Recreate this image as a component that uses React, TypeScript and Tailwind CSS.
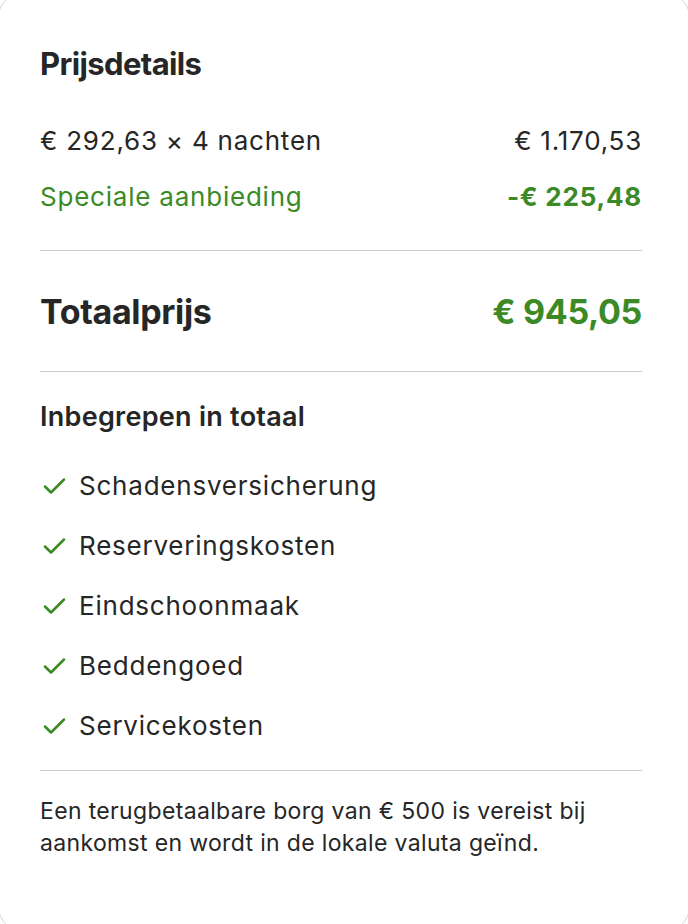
import React from "react";

const included = [
  "Schadensversicherung",
  "Reserveringskosten",
  "Eindschoonmaak",
  "Beddengoed",
  "Servicekosten",
];

function CheckIcon() {
  return (
    <svg width="24" height="20" viewBox="0 0 24 20" fill="none" className="ml-[2px] shrink-0">
      <path
        d="M3 10.5 9 16.5 22 3.5"
        stroke="#3b8a26"
        strokeWidth="2.5"
        strokeLinecap="round"
        strokeLinejoin="round"
      />
    </svg>
  );
}

export default function App() {
  return (
    <div className="w-[688px] h-[924px] overflow-hidden bg-white">
      <div
        className="-mt-[7px] -ml-[2px] w-[692px] h-[938px] rounded-3xl border border-[#d4d4d4] bg-white pt-[54px] pl-[41px] pr-[47px] text-[#262626]"
        style={{ fontFamily: "Inter, 'Noto Sans', sans-serif" }}
      >
        <h2 className="-mt-[2px] text-[31px] leading-9 font-bold tracking-[-0.02em]">Prijsdetails</h2>

        <div className="mt-[43px] flex justify-between text-[26px] leading-8 tracking-[0.03em]">
          <span>€ 292,63 × 4 nachten</span>
          <span>€ 1.170,53</span>
        </div>
        <div className="mt-6 flex justify-between text-[26px] leading-8 tracking-[0.03em] text-[#3b8a26]">
          <span>Speciale aanbieding</span>
          <span className="font-bold">-€ 225,48</span>
        </div>

        <div className="mt-[37px] h-px bg-[#cccccc]" />

        <div className="mt-[41px] flex justify-between text-[34px] leading-10 font-bold tracking-[-0.01em]">
          <span>Totaalprijs</span>
          <span className="text-[#3b8a26]">€ 945,05</span>
        </div>

        <div className="mt-[39px] h-px bg-[#cccccc]" />

        <h3 className="mt-[29px] text-[27px] leading-8 font-semibold tracking-[0.01em]">
          Inbegrepen in totaal
        </h3>

        <ul className="mt-[37px] flex flex-col gap-7">
          {included.map((item) => (
            <li key={item} className="flex items-center gap-[13px] text-[26px] leading-8 tracking-[0.03em]">
              <CheckIcon />
              <span>{item}</span>
            </li>
          ))}
        </ul>

        <div className="mt-7 h-px bg-[#cccccc]" />

        <p className="mt-6 text-[23px] leading-8 tracking-[0.015em]">
          Een terugbetaalbare borg van € 500 is vereist bij aankomst en wordt in de lokale valuta geïnd.
        </p>
      </div>
    </div>
  );
}
